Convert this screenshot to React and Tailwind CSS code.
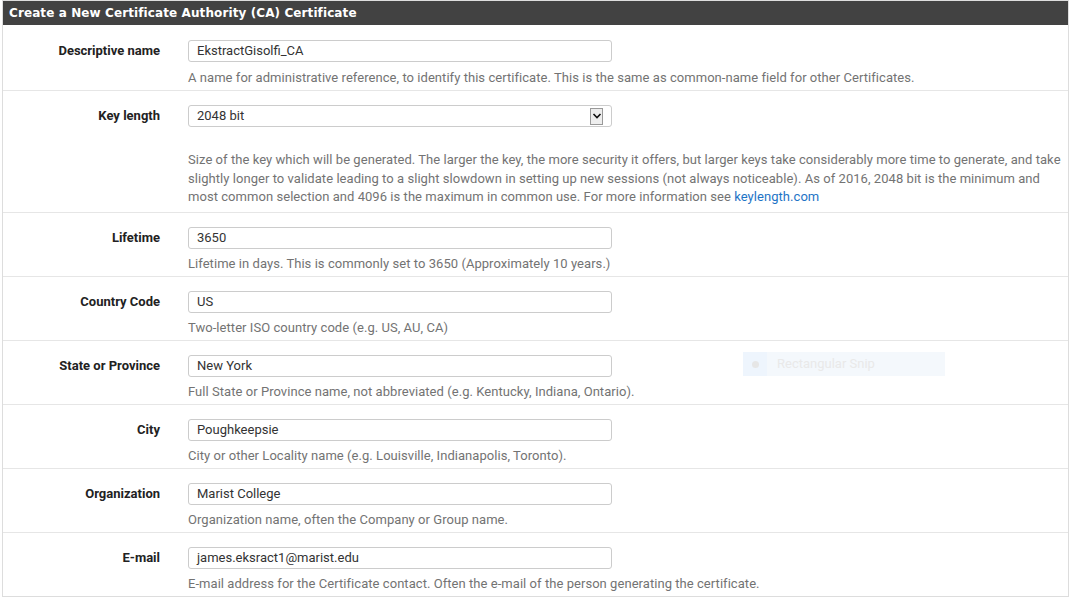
import React from 'react';

const rows = [
  { label: 'Descriptive name', value: 'EkstractGisolfi_CA', help: 'A name for administrative reference, to identify this certificate. This is the same as common-name field for other Certificates.' },
  { label: 'Key length', value: '2048 bit', select: true },
  { label: 'Lifetime', value: '3650', help: 'Lifetime in days. This is commonly set to 3650 (Approximately 10 years.)' },
  { label: 'Country Code', value: 'US', help: 'Two-letter ISO country code (e.g. US, AU, CA)' },
  { label: 'State or Province', value: 'New York', help: 'Full State or Province name, not abbreviated (e.g. Kentucky, Indiana, Ontario).' },
  { label: 'City', value: 'Poughkeepsie', help: 'City or other Locality name (e.g. Louisville, Indianapolis, Toronto).' },
  { label: 'Organization', value: 'Marist College', help: 'Organization name, often the Company or Group name.' },
  { label: 'E-mail', value: 'james.eksract1@marist.edu', help: 'E-mail address for the Certificate contact. Often the e-mail of the person generating the certificate.' },
];

const Field = ({ row, first }) => (
  <div className={`flex ${first ? '' : 'border-t border-[#e6e6e6]'}`}>
    <div className={`w-[157px] shrink-0 text-right text-[13px] font-bold leading-[22px] text-[#222] ${first ? 'pt-[15px]' : 'pt-[14px]'}`}>
      {row.label}
    </div>
    <div className={`ml-[28px] flex-1 pr-[3px] ${first ? 'pt-[15px]' : 'pt-[14px]'} ${row.select ? 'pb-[5px]' : 'pb-[4px]'}`}>
      {row.select ? (
        <div className="flex h-[22px] w-[424px] items-center justify-between rounded-[3px] border border-[#ccc] bg-white pl-[8px] pr-[8px] text-[13px] text-[#333]">
          <span>{row.value}</span>
          <span className="flex h-[17px] w-[13px] items-center justify-center border border-[#999] bg-[#eee]">
            <svg width="10" height="8" viewBox="0 0 10 8"><path d="M1.5 2l3.5 3.5L8.5 2" fill="none" stroke="#111" strokeWidth="1.6" /></svg>
          </span>
        </div>
      ) : (
        <div className="flex h-[22px] w-[424px] items-center rounded-[3px] border border-[#ccc] bg-white pl-[8px] text-[13px] text-[#333]">
          {row.value}
        </div>
      )}
      {row.select ? (
        <p className="mt-[24px] text-[13px] tracking-[0.05px] leading-[18.5px] text-[#737373]">
          Size of the key which will be generated. The larger the key, the more security it offers, but larger keys take considerably more time to generate, and take slightly longer to validate leading to a slight slowdown in setting up new sessions (not always noticeable). As of 2016, 2048 bit is the minimum and most common selection and 4096 is the maximum in common use. For more information see <span className="text-[#1e74c6]">keylength.com</span>
        </p>
      ) : (
        <p className={`text-[13px] tracking-[0.05px] leading-[17px] text-[#737373] ${first ? 'mt-[7px]' : 'mt-[6px]'}`}>{row.help}</p>
      )}
    </div>
  </div>
);

export default function App() {
  return (
    <div className="relative h-[602px] w-[1071px] bg-white px-[2px] [font-family:Roboto,'Liberation_Sans',sans-serif]">
      <div className="border border-[#ddd]">
        <div className="flex h-[24px] items-center bg-[#424242] pl-[6px] text-[12px] font-bold tracking-[0.1px] text-white [font-family:'DejaVu_Sans',sans-serif]">
          Create a New Certificate Authority (CA) Certificate
        </div>
        {rows.map((r, i) => (
          <Field key={r.label} row={r} first={i === 0} />
        ))}
      </div>
      <div className="absolute left-[743px] top-[352px] flex h-[24px] w-[202px] items-center bg-[#f4f8fc] text-[13px] text-[#e9e9e9]">
        <span className="flex h-full w-[24px] items-center justify-center bg-[#eef5fd]">
          <span className="h-[7px] w-[7px] rounded-full bg-[#e6e6e6]" />
        </span>
        <span className="ml-[10px]">Rectangular Snip</span>
      </div>
    </div>
  );
}
